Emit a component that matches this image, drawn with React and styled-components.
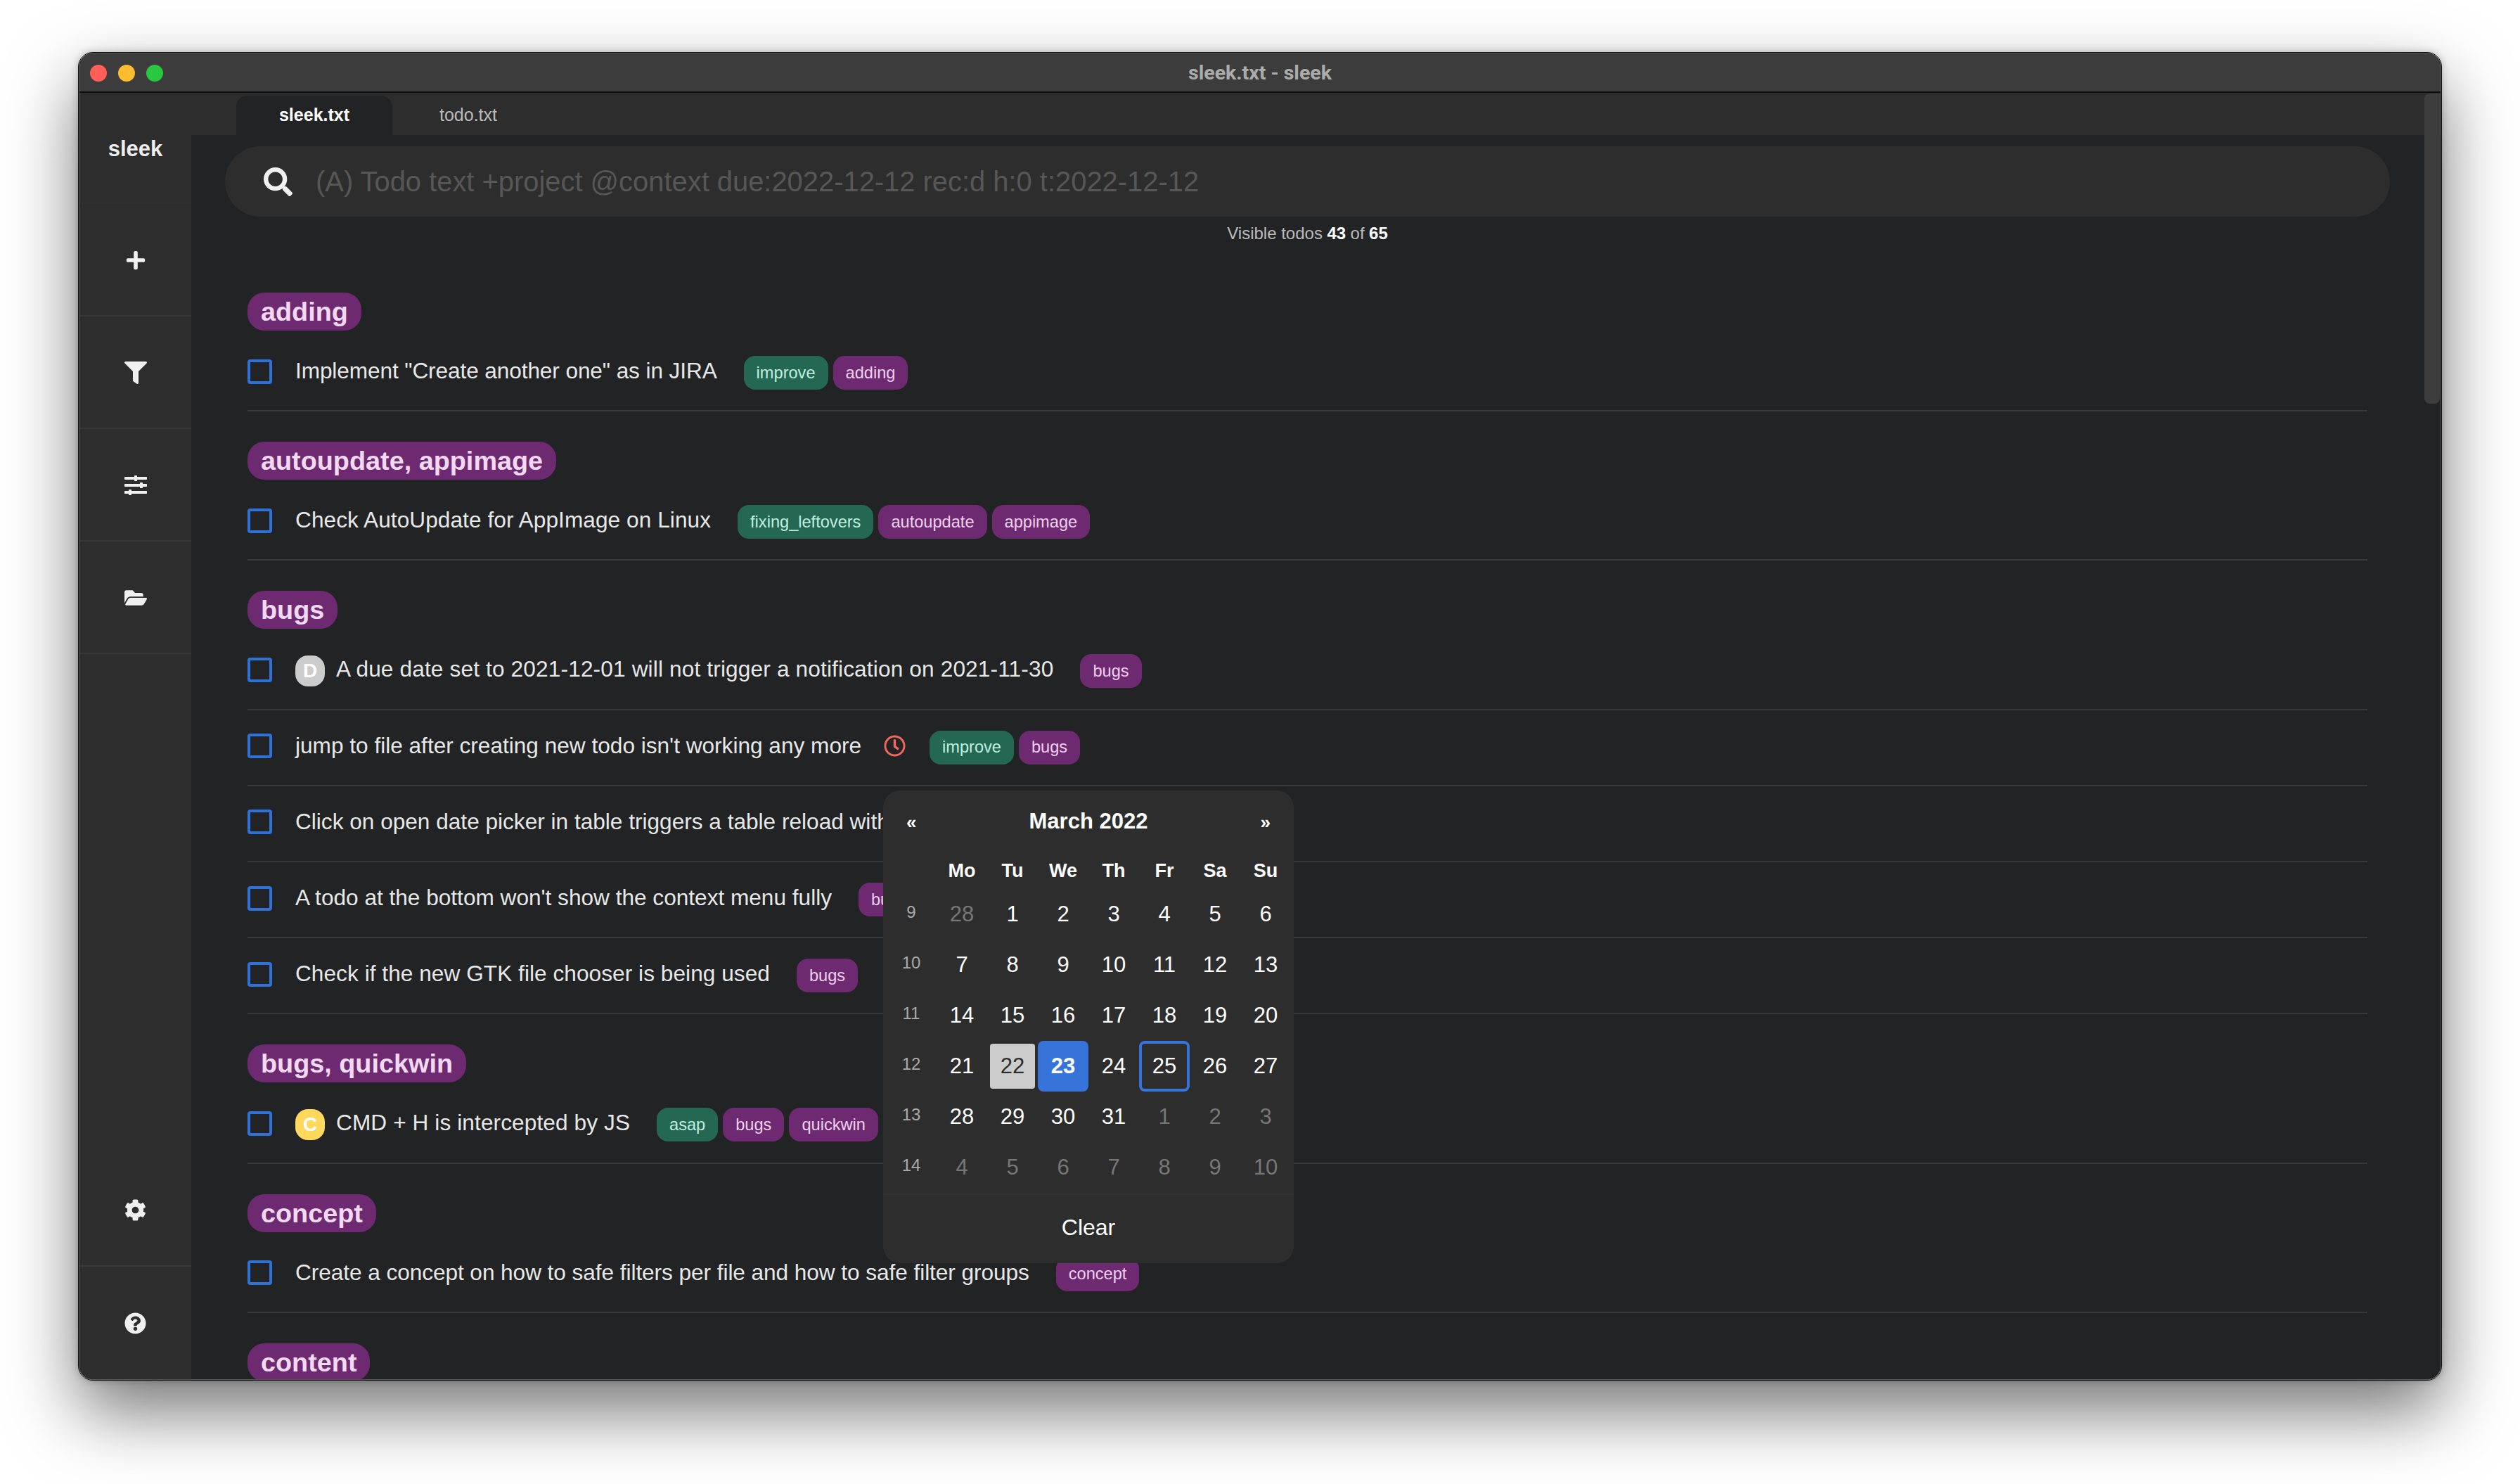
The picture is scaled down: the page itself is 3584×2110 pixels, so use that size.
import React from "react"
import styled, { createGlobalStyle } from "styled-components"
import { FaPlus, FaFilter, FaSlidersH, FaFolderOpen, FaCog, FaQuestionCircle, FaSearch, FaRegClock } from "react-icons/fa"

const GlobalStyle = createGlobalStyle`
    html, body {
        margin: 0;
        padding: 0;
        background: #fff;
    }
    * {
        box-sizing: border-box;
    }
    body {
        font-family: "Liberation Sans", Arial, sans-serif;
    }
`

const Page = styled.div`
    width: 3584px;
    height: 2110px;
    padding: 75px 112px 0 112px;
    overflow: hidden;
`

const Shadow = styled.div`
    width: 3360px;
    height: 1887px;
    border-radius: 20px;
    box-shadow: 0 44px 100px rgba(0, 0, 0, 0.55), 0 0 12px rgba(0, 0, 0, 0.3);
`

const Window = styled.div`
    position: relative;
    width: 3360px;
    height: 1887px;
    display: flex;
    flex-direction: column;
    background: #212325;
    border-radius: 20px;
    overflow: hidden;
    border: 1px solid #555;
    outline: 1px solid #111;
`

const TitleBar = styled.div`
    position: relative;
    flex: 0 0 56px;
    display: flex;
    align-items: center;
    justify-content: center;
    background: #3c3c3c;
    border-bottom: 2px solid #0e0e0e;
`

const Lights = styled.div`
    position: absolute;
    left: 15px;
    top: 16px;
    display: flex;
    gap: 16px;
`

const Light = styled.span`
    width: 24px;
    height: 24px;
    border-radius: 50%;
    background: ${props => props.color};
`

const WindowTitle = styled.span`
    font-family: Roboto, sans-serif;
    font-weight: 700;
    font-size: 28.5px;
    color: #acacac;
`

const Body = styled.div`
    flex: 1;
    display: flex;
    min-height: 0;
`

const Sidebar = styled.nav`
    flex: 0 0 159px;
    display: flex;
    flex-direction: column;
    background: #2d2d2d;
    color: #f0f0f0;
`

const Brand = styled.div`
    flex: 0 0 158px;
    padding-top: 58px;
    text-align: center;
    font-size: 31px;
    font-weight: 700;
    line-height: 44px;
    color: #eee;
    border-bottom: 2px solid #303030;
`

const NavItem = styled.div`
    flex: 0 0 160px;
    display: flex;
    align-items: center;
    justify-content: center;
    padding-top: ${props => props.nudge ? "2px" : "0"};
    font-size: ${props => props.size}px;
    border-bottom: ${props => props.last ? "none" : "2px solid #383838"};
`

const Spacer = styled.div`
    flex: 1;
`

const Main = styled.main`
    flex: 1;
    min-width: 0;
    display: flex;
    flex-direction: column;
`

const TabBar = styled.div`
    flex: 0 0 60px;
    display: flex;
    align-items: flex-end;
    padding-left: 64px;
    background: #2d2d2d;
`

const Tab = styled.div`
    width: ${props => props.width}px;
    height: 56px;
    display: flex;
    align-items: center;
    justify-content: center;
    padding-bottom: 2px;
    border-radius: 16px 16px 0 0;
    font-size: 25px;
    font-weight: ${props => props.active ? 700 : 400};
    color: ${props => props.active ? "#fff" : "#bbb"};
    background: ${props => props.active ? "#212325" : "transparent"};
`

const Content = styled.div`
    flex: 1;
    min-height: 0;
    overflow: hidden;
    padding: 16px 72px 0 48px;
`

const SearchBar = styled.div`
    height: 100px;
    display: flex;
    align-items: center;
    gap: 33px;
    padding-left: 55px;
    border-radius: 50px;
    background: #2d2d2d;
    color: #f0f0f0;
    font-size: 41px;
`

const Placeholder = styled.span`
    font-size: 39.9px;
    color: #575757;
    white-space: nowrap;
`

const Counter = styled.div`
    height: 48px;
    display: flex;
    align-items: center;
    justify-content: center;
    gap: 0.27em;
    font-size: 24px;
    color: #bbb;
    white-space: pre;
    b {
        color: #fff;
    }
`

const List = styled.div`
    padding: 60px 32px 0 32px;
`

const Group = styled.section`
    margin-bottom: 43px;
`

const GroupPill = styled.h3`
    display: block;
    width: fit-content;
    height: 54px;
    margin: 0 0 7px;
    padding: 0 19px;
    border-radius: 24px;
    line-height: 54px;
    font-size: 37.8px;
    font-weight: 700;
    color: #f3d9f3;
    background: #6e2a70;
`

const Row = styled.div`
    height: 108.2px;
    display: flex;
    align-items: center;
    border-bottom: 2px solid #38393a;
`

const Checkbox = styled.span`
    flex: 0 0 35px;
    width: 35px;
    height: 35px;
    margin-right: 33px;
    margin-top: -4px;
    border: 4px solid #2e72d8;
    border-radius: 4px;
`

const Priority = styled.span`
    flex: 0 0 42px;
    height: 44px;
    margin-right: 16px;
    margin-top: -1px;
    display: flex;
    align-items: center;
    justify-content: center;
    border-radius: 18px;
    font-size: 28px;
    font-weight: 700;
    color: #fff;
    background: ${props => props.color};
`

const TodoText = styled.span`
    margin-top: -5px;
    font-size: 31.6px;
    letter-spacing: ${props => props.spacing || 0}px;
    color: #e8e8e8;
    white-space: nowrap;
`

const Clock = styled.span`
    display: flex;
    margin: -4px 0 0 32px;
    font-size: 31px;
    color: #f0695c;
`

const Tags = styled.div`
    display: flex;
    gap: 7px;
    margin-left: ${props => props.offset || 38}px;
`

const Tag = styled.span`
    height: 48px;
    display: flex;
    align-items: center;
    padding: 0 18px;
    border-radius: 16px;
    font-size: 23.6px;
    white-space: nowrap;
    color: ${props => props.green ? "#c0efe0" : "#f0d0f0"};
    background: ${props => props.green ? "#246853" : "#6e2a70"};
`

const Scrollbar = styled.div`
    position: absolute;
    top: 57px;
    right: 1px;
    width: 22px;
    height: 441px;
    border-radius: 8px 0 8px 8px;
    background: #3d3d3d;
`

const Calendar = styled.div`
    position: absolute;
    left: 1143px;
    top: 1048px;
    width: 584px;
    height: 672px;
    padding: 0 4px;
    border-radius: 24px;
    background: #2d2d2d;
    color: #fff;
`

const CalHeader = styled.div`
    height: 88px;
    display: flex;
    align-items: center;
    justify-content: space-between;
    padding: 0 29px;
    font-size: 31px;
    font-weight: 700;
`

const Arrow = styled.span`
    font-size: 26px;
    padding-top: 2px;
`

const CalGrid = styled.div`
    display: grid;
    grid-template-columns: repeat(8, 72px);
    grid-template-rows: 52px repeat(6, 72px);
    height: 485px;
`

const WeekDay = styled.div`
    display: flex;
    align-items: center;
    justify-content: center;
    font-size: 27px;
    font-weight: 700;
`

const WeekNo = styled.div`
    display: flex;
    align-items: center;
    justify-content: center;
    padding-bottom: 6px;
    font-size: 24px;
    color: #aaa;
`

const Day = styled.div`
    display: flex;
    align-items: center;
    justify-content: center;
    font-size: 31px;
    color: ${props => props.muted ? "#777" : "#fff"};
`

const TodayCell = styled(Day)`
    margin: 4px;
    border-radius: 4px;
    color: #2d2d2d;
    background: #ccc;
`

const SelectedCell = styled(Day)`
    border-radius: 8px;
    font-weight: 700;
    background: #3674d9;
`

const FocusCell = styled(Day)`
    border: 4px solid #3674d9;
    border-radius: 8px;
`

const CalFooter = styled.div`
    margin: 0 -4px;
    height: 94px;
    display: flex;
    align-items: center;
    justify-content: center;
    border-top: 2px solid #323232;
    font-size: 32px;
`

const groups = [
    { name: "adding", rows: [
        { text: "Implement \"Create another one\" as in JIRA", spacing: -0.1, tags: [["improve", true], ["adding"]] },
    ] },
    { name: "autoupdate, appimage", rows: [
        { text: "Check AutoUpdate for AppImage on Linux", spacing: 0.07, tags: [["fixing_leftovers", true], ["autoupdate"], ["appimage"]] },
    ] },
    { name: "bugs", rows: [
        { text: "A due date set to 2021-12-01 will not trigger a notification on 2021-11-30", spacing: 0.15, pri: ["D", "#cccccc"], tags: [["bugs"]] },
        { text: "jump to file after creating new todo isn't working any more", clock: true, tags: [["improve", true], ["bugs"]] },
        { text: "Click on open date picker in table triggers a table reload without", tags: [["bugs"]] },
        { text: "A todo at the bottom won't show the context menu fully", tags: [["bugs"]] },
        { text: "Check if the new GTK file chooser is being used", spacing: 0.05, tags: [["bugs"]] },
    ] },
    { name: "bugs, quickwin", rows: [
        { text: "CMD + H is intercepted by JS", spacing: 0.1, pri: ["C", "#ffd85c"], tags: [["asap", true], ["bugs"], ["quickwin"]] },
    ] },
    { name: "concept", rows: [
        { text: "Create a concept on how to safe filters per file and how to safe filter groups", spacing: -0.06, tags: [["concept"]] },
    ] },
    { name: "content", rows: [] },
]

const weeks = [
    [9, [[28, 1], 1, 2, 3, 4, 5, 6]],
    [10, [7, 8, 9, 10, 11, 12, 13]],
    [11, [14, 15, 16, 17, 18, 19, 20]],
    [12, [21, 22, 23, 24, 25, 26, 27]],
    [13, [28, 29, 30, 31, [1, 1], [2, 1], [3, 1]]],
    [14, [[4, 1], [5, 1], [6, 1], [7, 1], [8, 1], [9, 1], [10, 1]]],
]

function CalendarDay({ value }) {
    if (Array.isArray(value)) return <Day muted>{value[0]}</Day>
    if (value === 22) return <TodayCell>{value}</TodayCell>
    if (value === 23) return <SelectedCell>{value}</SelectedCell>
    if (value === 25) return <FocusCell>{value}</FocusCell>
    return <Day>{value}</Day>
}

function DatePicker() {
    return (
        <Calendar>
            <CalHeader>
                <Arrow>«</Arrow>
                <span>March 2022</span>
                <Arrow>»</Arrow>
            </CalHeader>
            <CalGrid>
                <div />
                {["Mo", "Tu", "We", "Th", "Fr", "Sa", "Su"].map(d => <WeekDay key={d}>{d}</WeekDay>)}
                {weeks.map(([no, days]) => (
                    <React.Fragment key={no}>
                        <WeekNo>{no}</WeekNo>
                        {days.map((d, i) => <CalendarDay key={i} value={d} />)}
                    </React.Fragment>
                ))}
            </CalGrid>
            <CalFooter>Clear</CalFooter>
        </Calendar>
    )
}

function Todo({ text, spacing, pri, clock, tags }) {
    return (
        <Row>
            <Checkbox />
            {pri && <Priority color={pri[1]}>{pri[0]}</Priority>}
            <TodoText spacing={spacing}>{text}</TodoText>
            {clock && <Clock><FaRegClock /></Clock>}
            <Tags offset={clock ? 34 : 38}>
                {tags.map(([label, green]) => <Tag key={label} green={green}>{label}</Tag>)}
            </Tags>
        </Row>
    )
}

export default function App() {
    return (
        <Page>
            <GlobalStyle />
            <Shadow>
                <Window>
                    <TitleBar>
                        <Lights>
                            <Light color="#ff5f57" />
                            <Light color="#febc2e" />
                            <Light color="#28c840" />
                        </Lights>
                        <WindowTitle>sleek.txt - sleek</WindowTitle>
                    </TitleBar>
                    <Body>
                        <Sidebar>
                            <Brand>sleek</Brand>
                            <NavItem nudge size={30}><FaPlus /></NavItem>
                            <NavItem nudge size={32}><FaFilter /></NavItem>
                            <NavItem nudge size={32}><FaSlidersH /></NavItem>
                            <NavItem nudge size={32}><FaFolderOpen /></NavItem>
                            <Spacer />
                            <NavItem size={31}><FaCog /></NavItem>
                            <NavItem size={31} last><FaQuestionCircle /></NavItem>
                        </Sidebar>
                        <Main>
                            <TabBar>
                                <Tab active width={222}>sleek.txt</Tab>
                                <Tab width={216}>todo.txt</Tab>
                            </TabBar>
                            <Content>
                                <SearchBar>
                                    <FaSearch />
                                    <Placeholder>(A) Todo text +project @context due:2022-12-12 rec:d h:0 t:2022-12-12</Placeholder>
                                </SearchBar>
                                <Counter><span>Visible todos</span><b>43</b><span>of</span><b>65</b></Counter>
                                <List>
                                    {groups.map(group => (
                                        <Group key={group.name}>
                                            <GroupPill>{group.name}</GroupPill>
                                            {group.rows.map(row => <Todo key={row.text} {...row} />)}
                                        </Group>
                                    ))}
                                </List>
                            </Content>
                        </Main>
                    </Body>
                    <Scrollbar />
                    <DatePicker />
                </Window>
            </Shadow>
        </Page>
    )
}
